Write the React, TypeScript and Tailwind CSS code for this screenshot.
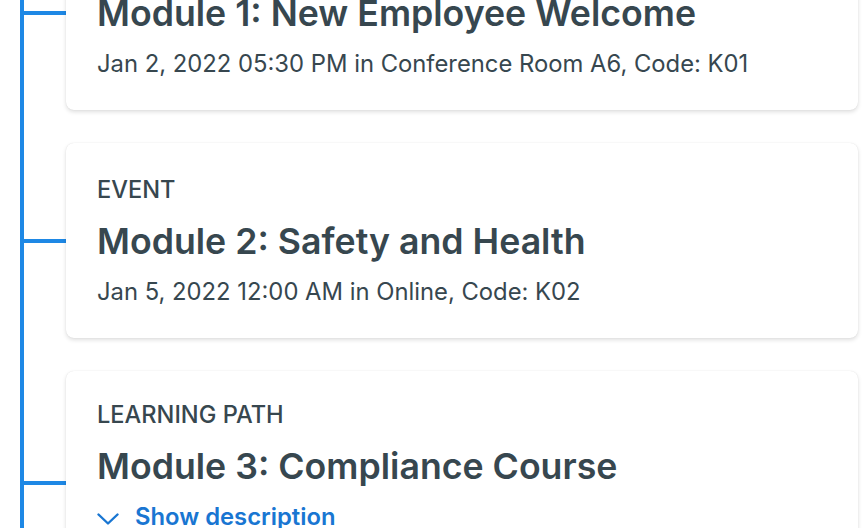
import React from 'react';

type Item = {
  kind: string;
  title: string;
  when?: string;
  expandable?: boolean;
};

const items: Item[] = [
  {
    kind: 'Event',
    title: 'Module 1: New Employee Welcome',
    when: 'Jan 2, 2022 05:30 PM in Conference Room A6, Code: K01',
  },
  {
    kind: 'Event',
    title: 'Module 2: Safety and Health',
    when: 'Jan 5, 2022 12:00 AM in Online, Code: K02',
  },
  {
    kind: 'Learning Path',
    title: 'Module 3: Compliance Course',
    expandable: true,
  },
];

function Chevron() {
  return (
    <svg className="w-[22px] h-[12px]" viewBox="0 0 22 12" fill="none" stroke="currentColor">
      <path d="M1.5 1.5L11 10.5L20.5 1.5" strokeWidth={2.4} strokeLinecap="round" strokeLinejoin="round" />
    </svg>
  );
}

function TimelineCard({ item }: { item: Item }) {
  return (
    <div
      className={`flex-1 min-w-0 rounded-lg bg-white px-[31px] pb-[30px] shadow-[0_2px_4px_rgba(0,0,0,0.13),0_0_1px_rgba(0,0,0,0.12)] ${
        item.expandable ? 'min-h-[224px] pt-[29px]' : 'pt-[32px]'
      }`}
    >
      {/* Type label */}
      <div className="text-[23.6px] leading-[29px] font-medium uppercase">{item.kind}</div>

      {/* Title */}
      <div className="mt-[14px] text-[35.7px] leading-[46px] font-semibold whitespace-nowrap">{item.title}</div>

      {item.when && <div className="mt-[12px] text-[23.8px] leading-[32px] whitespace-nowrap">{item.when}</div>}

      {item.expandable && (
        <button className="mt-[12px] flex items-center gap-[16px] text-[23.8px] leading-[32px] font-semibold text-[#1976d2]">
          <span className="pt-[4px]">
            <Chevron />
          </span>
          Show description
        </button>
      )}
    </div>
  );
}

export default function App() {
  return (
    <div className="w-[866px] h-[528px] overflow-hidden bg-white text-[#37474f] font-['Inter','Noto_Sans',sans-serif]">
      <div className="-mt-[85px] ml-[20px] mr-[8px] border-l-4 border-[#1e88e5] flex flex-col gap-[33px] pb-10">
        {items.map((item) => (
          <div key={item.title} className="flex items-center">
            {/* connector */}
            <div className="w-[42px] h-[4px] bg-[#1e88e5] shrink-0" />
            <TimelineCard item={item} />
          </div>
        ))}
      </div>
    </div>
  );
}
